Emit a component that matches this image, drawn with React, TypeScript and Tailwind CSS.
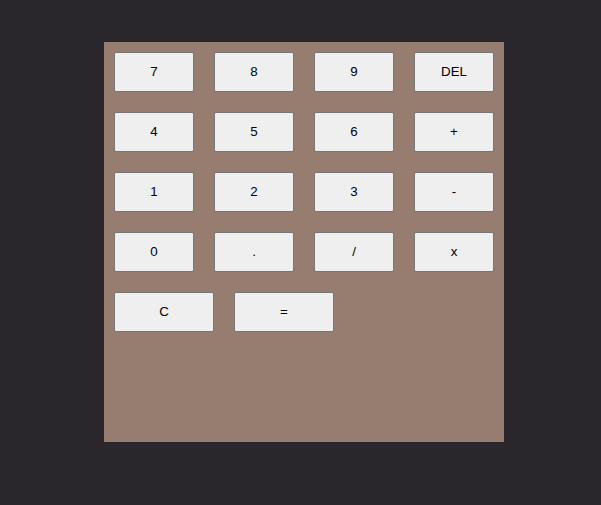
const rows = [
  ['7', '8', '9', 'DEL'],
  ['4', '5', '6', '+'],
  ['1', '2', '3', '-'],
  ['0', '.', '/', 'x'],
];

function Key({ label, wide }: { label: string; wide?: boolean }) {
  return (
    <button
      className={`${wide ? 'w-[100px]' : 'w-[80px]'} h-[40px] m-[10px] bg-[#efefef] border border-[#767676] rounded-[2px] text-[13.33px] text-black leading-none`}
      style={{ fontFamily: '"Liberation Sans", Arial, sans-serif' }}
    >
      {label}
    </button>
  );
}

export default function App() {
  return (
    <div className="min-h-[505px] w-full bg-[#29272b] pt-[42px] pl-[104px]">
      <div className="w-[400px] h-[400px] bg-[#967d6f]">
        {rows.map((row, i) => (
          <div key={i} className="flex">
            {row.map((k) => (
              <Key key={k} label={k} />
            ))}
          </div>
        ))}
        <div className="flex">
          <Key label="C" wide />
          <Key label="=" wide />
        </div>
      </div>
    </div>
  );
}
